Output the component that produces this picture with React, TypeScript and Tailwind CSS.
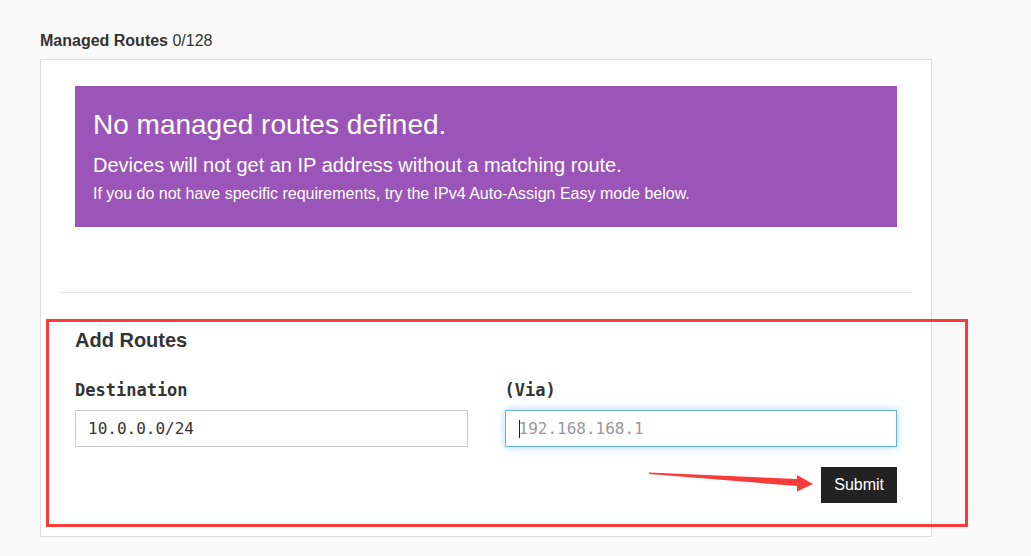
import React from "react";

export default function App() {
    return (
        <div className="relative w-[1031px] h-[556px] overflow-hidden bg-[#fafafa] font-['Liberation_Sans',Arial,sans-serif] text-[#333]">
            <div className="pl-[40px] pt-[32px]">
                {/* Section title */}
                <div className="text-[16px] leading-[18px] mb-[9px]">
                    <span className="font-bold">Managed Routes</span> <span>0/128</span>
                </div>

                {/* Card */}
                <div className="w-[892px] bg-white border border-[#dcdcdc]">
                    <div className="px-[34px] pt-[26px]">
                        <div className="bg-[#9b55b9] text-white pl-[18px] pr-4 pt-[23px] pb-[23px]">
                            <h2 className="text-[28px] leading-[32px]">No managed routes defined.</h2>
                            <p className="text-[20px] leading-[24px] mt-[12px]">
                                Devices will not get an IP address without a matching route.
                            </p>
                            <p className="text-[16px] leading-[20px] mt-[7px]">
                                If you do not have specific requirements, try the IPv4 Auto-Assign Easy mode below.
                            </p>
                        </div>
                    </div>

                    <div className="mx-[19px] mt-[65px] h-px bg-[#e5e5e5]" />

                    <div className="px-[34px] pt-[35px] pb-[33px]">
                        <h3 className="text-[20px] leading-[24px] font-bold">Add Routes</h3>
                        <div className="grid grid-cols-2 gap-[37px] mt-[28px]">
                            <div>
                                <label className="block font-['DejaVu_Sans_Mono',monospace] font-bold text-[17px] leading-[20px]">
                                    Destination
                                </label>
                                <input
                                    readOnly
                                    value="10.0.0.0/24"
                                    className="mt-[10px] block w-full h-[37px] border border-[#ccc] px-[12px] font-['DejaVu_Sans_Mono',monospace] text-[16px] text-[#333] outline-none"
                                />
                            </div>
                            <div>
                                <label className="block font-['DejaVu_Sans_Mono',monospace] font-bold text-[17px] leading-[20px]">
                                    (Via)
                                </label>
                                <div className="relative mt-[10px]">
                                    <input
                                        readOnly
                                        placeholder="192.168.168.1"
                                        className="block w-full h-[37px] border border-[#66afe9] px-[13px] font-['DejaVu_Sans_Mono',monospace] text-[16px] text-[#333] placeholder:text-[#999] outline-none shadow-[0_0_8px_rgba(102,175,233,0.5)]"
                                    />
                                    <span className="absolute left-[14px] top-[10px] w-px h-[18px] bg-[#222]" />
                                </div>
                            </div>
                        </div>
                        <div className="flex justify-end mt-[20px]">
                            <button className="h-[36px] px-[13px] bg-[#222] text-white text-[16px]">Submit</button>
                        </div>
                    </div>
                </div>
            </div>

            {/* Annotation overlay */}
            <div className="absolute left-[46px] top-[319px] w-[922px] h-[208px] border-[3px] border-[#fb3a3a] pointer-events-none" />
            <svg className="absolute left-0 top-0 pointer-events-none" width="1031" height="556">
                <polygon
                    points="649,472.5 797,479 797,475 813,484 797,491.5 797,486 649,474"
                    fill="#fb3a3a"
                />
            </svg>
        </div>
    );
}
